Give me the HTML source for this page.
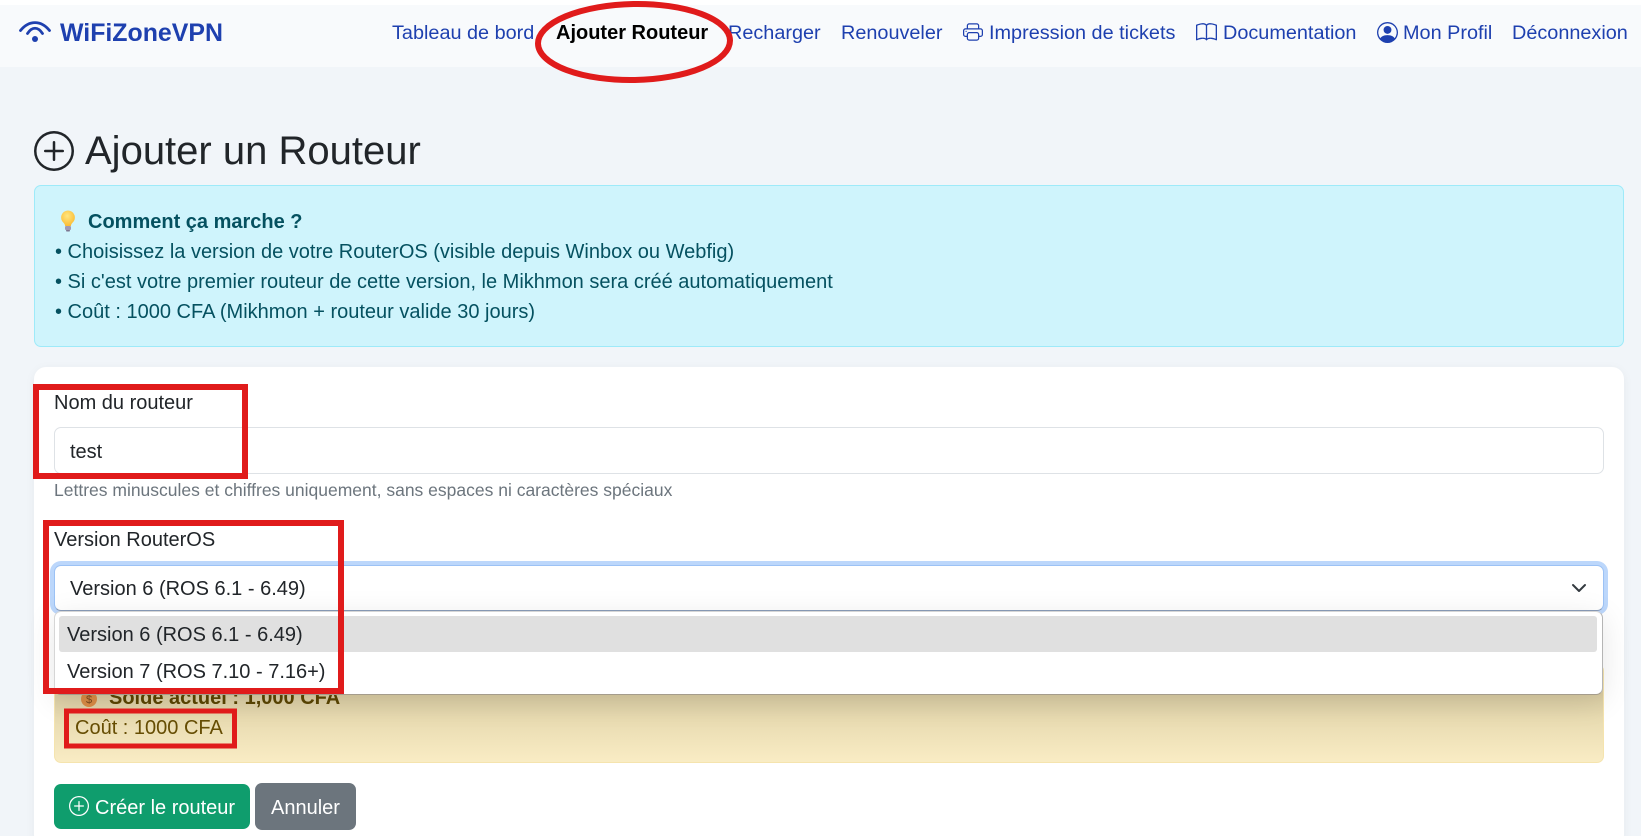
<!DOCTYPE html>
<html lang="fr"><head><meta charset="utf-8"><title>Ajouter un Routeur</title>
<style>
html,body{margin:0;padding:0;width:1641px;height:836px;overflow:hidden;background:#f1f5f9}
body{position:relative;font-family:"Liberation Sans",Arial,sans-serif;color:#212529}
.a{position:absolute}
.t{position:absolute;white-space:nowrap;line-height:30px;height:30px;font-size:20px}
.n{color:#1e40af;top:18px;font-size:19.85px}
svg{position:absolute;display:block}
</style></head><body>
<div class="a" style="left:0;top:0;width:1641px;height:5px;background:#fff"></div>
<div class="a" style="left:0;top:5px;width:1641px;height:62px;background:#f8fafc"></div>

<svg style="left:0;top:0" width="60" height="60" fill="none" stroke="#1e40af" stroke-width="2.800" stroke-linecap="round"><path d="M20.500 30.500C29 20 41 20 49.500 30.500"/><path d="M27.500 33.500C32 26.500 38 26.500 42.500 33.500"/><circle cx="35" cy="39" r="3" fill="#1e40af" stroke="none"/></svg>
<div class="t" style="left:60px;top:18px;font-size:24.9px;font-weight:700;color:#1e40af">WiFiZoneVPN</div>

<div class="t n" style="left:392px">Tableau de bord</div>
<div class="t" style="left:556px;top:18px;font-weight:700;color:#000">Ajouter Routeur</div>
<div class="t n" style="left:728px">Recharger</div>
<div class="t n" style="left:841px">Renouveler</div>
<svg style="left:963px;top:22px" width="20" height="20" viewBox="0 0 16 16" fill="#1e40af"><path d="M2.500 8a.5.5 0 1 0 0-1 .5.5 0 0 0 0 1"/><path d="M5 1a2 2 0 0 0-2 2v2H2a2 2 0 0 0-2 2v3a2 2 0 0 0 2 2h1v1a2 2 0 0 0 2 2h6a2 2 0 0 0 2-2v-1h1a2 2 0 0 0 2-2V7a2 2 0 0 0-2-2h-1V3a2 2 0 0 0-2-2zM4 3a1 1 0 0 1 1-1h6a1 1 0 0 1 1 1v2H4zm1 5a2 2 0 0 0-2 2v1H2a1 1 0 0 1-1-1V7a1 1 0 0 1 1-1h12a1 1 0 0 1 1 1v3a1 1 0 0 1-1 1h-1v-1a2 2 0 0 0-2-2zm7 2v3a1 1 0 0 1-1 1H5a1 1 0 0 1-1-1v-3a1 1 0 0 1 1-1h6a1 1 0 0 1 1 1"/></svg>
<div class="t n" style="left:989px">Impression de tickets</div>
<svg style="left:1196px;top:22px" width="21" height="21" viewBox="0 0 16 16" fill="#1e40af"><path d="M1 2.828c.885-.37 2.154-.769 3.388-.893 1.330-.134 2.458.063 3.112.752v9.746c-.935-.53-2.120-.603-3.213-.493-1.180.12-2.370.461-3.287.811zm7.500-.141c.654-.689 1.782-.886 3.112-.752 1.234.124 2.503.523 3.388.893v9.923c-.918-.35-2.107-.692-3.287-.81-1.094-.111-2.278-.039-3.213.492zM8 1.783C7.015.936 5.587.81 4.287.94c-1.514.153-3.042.672-3.994 1.105A.5.5 0 0 0 0 2.500v11a.5.5 0 0 0 .707.455c.882-.4 2.303-.881 3.680-1.020 1.409-.142 2.590.087 3.223.877a.5.5 0 0 0 .78 0c.633-.79 1.814-1.019 3.222-.877 1.378.139 2.800.62 3.681 1.020A.5.5 0 0 0 16 13.500v-11a.5.5 0 0 0-.293-.455c-.952-.433-2.480-.952-3.994-1.105C10.413.809 8.985.936 8 1.783"/></svg>
<div class="t n" style="left:1223px">Documentation</div>
<svg style="left:1377px;top:22px" width="21" height="21" viewBox="0 0 16 16" fill="#1e40af"><path d="M11 6a3 3 0 1 1-6 0 3 3 0 0 1 6 0"/><path d="M0 8a8 8 0 1 1 16 0A8 8 0 0 1 0 8m8-7a7 7 0 0 0-5.468 11.370C3.242 11.226 4.805 10 8 10s4.757 1.225 5.468 2.370A7 7 0 0 0 8 1"/></svg>
<div class="t n" style="left:1403px">Mon Profil</div>
<div class="t n" style="left:1512px">Déconnexion</div>

<svg style="left:34px;top:131px" width="40" height="40" viewBox="0 0 16 16" fill="#212529"><path d="M8 15A7 7 0 1 1 8 1a7 7 0 0 1 0 14m0 1A8 8 0 1 0 8 0a8 8 0 0 0 0 16"/><path d="M8 4a.5.5 0 0 1 .5.5v3h3a.5.5 0 0 1 0 1h-3v3a.5.5 0 0 1-1 0v-3h-3a.5.5 0 0 1 0-1h3v-3A.5.5 0 0 1 8 4"/></svg>
<div class="t" style="left:85px;top:126px;height:50px;line-height:50px;font-size:40px">Ajouter un Routeur</div>

<div class="a" style="left:34px;top:185px;width:1588px;height:160px;background:#cff4fc;border:1px solid #9eeaf9;border-radius:7px"></div>
<svg style="left:57px;top:209px" width="22" height="24" viewBox="0 0 22 24"><defs><radialGradient id="b" cx=".45" cy=".35" r=".7"><stop offset="0" stop-color="#ffe680"/><stop offset="1" stop-color="#fbb92e"/></radialGradient></defs><path d="M11 1.500a7 7 0 0 0-4.500 12.300c1 .9 1.500 2 1.600 3.200h5.800c.1-1.200.6-2.300 1.600-3.200A7 7 0 0 0 11 1.500z" fill="url(#b)"/><rect x="8" y="17" width="6" height="4" rx="1" fill="#a29ab3"/><rect x="9" y="21" width="4" height="1.500" rx=".7" fill="#7d7690"/></svg>
<div class="t" style="left:88px;top:207px;font-weight:700;color:#055160">Comment ça marche ?</div>
<div class="t" style="left:55px;top:237px;color:#055160">• Choisissez la version de votre RouterOS (visible depuis Winbox ou Webfig)</div>
<div class="t" style="left:55px;top:267px;color:#055160">• Si c'est votre premier routeur de cette version, le Mikhmon sera créé automatiquement</div>
<div class="t" style="left:55px;top:297px;color:#055160">• Coût : 1000 CFA (Mikhmon + routeur valide 30 jours)</div>

<div class="a" style="left:34px;top:367px;width:1590px;height:480px;background:#fff;border-radius:12px;box-shadow:0 2px 10px rgba(0,0,0,.05)"></div>

<div class="t" style="left:54px;top:388px">Nom du routeur</div>
<div class="a" style="left:54px;top:427px;width:1548px;height:45px;background:#fff;border:1px solid #dee2e6;border-radius:7px"></div>
<div class="t" style="left:70px;top:437px">test</div>
<div class="t" style="left:54px;top:475px;font-size:17.500px;color:#6c757d">Lettres minuscules et chiffres uniquement, sans espaces ni caractères spéciaux</div>

<div class="t" style="left:54px;top:525px">Version RouterOS</div>

<div class="a" style="left:54px;top:664px;width:1548px;height:97px;background:linear-gradient(180deg,#d8cba2 0,#d8cba2 30%,#e8dbb1 55%,#f9ecc4 100%);border:1px solid #f5e4ae;border-radius:7px"></div>
<svg style="left:80px;top:690px" width="18" height="18" viewBox="0 0 18 18"><circle cx="9" cy="9" r="8" fill="#d98b45"/><text x="9" y="13" font-family="Liberation Sans,sans-serif" font-size="11" text-anchor="middle" fill="#7a4a1e">$</text></svg>
<div class="t" style="left:109px;top:683px;font-weight:700;color:#5a4503">Solde actuel : 1,000 CFA</div>
<div class="t" style="left:75px;top:713px;color:#664d03">Coût : 1000 CFA</div>

<div class="a" style="left:54px;top:565px;width:1548px;height:44px;background:#fff;border:1px solid #9cc2f5;border-bottom-color:#8a9cb8;border-radius:7px;box-shadow:0 0 0 4px #bcd7fb"></div>
<div class="t" style="left:70px;top:574px">Version 6 (ROS 6.1 - 6.49)</div>
<svg style="left:1571px;top:580px" width="16" height="16" viewBox="0 0 16 16" fill="none" stroke="#343a40" stroke-width="2" stroke-linecap="round" stroke-linejoin="round"><path d="m2 5 6 6 6-6"/></svg>

<div class="a" style="left:54px;top:611px;width:1547px;height:82px;background:#fff;border:1px solid #d6d6d6;border-bottom-color:#a59c8c;border-right-color:#b5b5b5;border-radius:7px;box-shadow:0 6px 30px rgba(0,0,0,.1)"></div>
<div class="a" style="left:59px;top:616px;width:1538px;height:36px;background:#e0e0e0;border-radius:3px"></div>
<div class="t" style="left:67px;top:620px">Version 6 (ROS 6.1 - 6.49)</div>
<div class="t" style="left:67px;top:657px">Version 7 (ROS 7.10 - 7.16+)</div>

<div class="a" style="left:54px;top:784px;width:196px;height:45px;background:#0f9d6d;border-radius:7px"></div>
<svg style="left:69px;top:796px" width="20" height="20" viewBox="0 0 16 16" fill="#fff"><path d="M8 15A7 7 0 1 1 8 1a7 7 0 0 1 0 14m0 1A8 8 0 1 0 8 0a8 8 0 0 0 0 16"/><path d="M8 4a.5.5 0 0 1 .5.5v3h3a.5.5 0 0 1 0 1h-3v3a.5.5 0 0 1-1 0v-3h-3a.5.5 0 0 1 0-1h3v-3A.5.5 0 0 1 8 4"/></svg>
<div class="t" style="left:95px;top:793px;color:#fff">Créer le routeur</div>
<div class="a" style="left:255px;top:783px;width:101px;height:47px;background:#6c757d;border-radius:7px"></div>
<div class="t" style="left:271px;top:793px;color:#fff">Annuler</div>

<svg style="left:0;top:0" width="1641" height="836" fill="none" stroke="#e01b1b">
<ellipse cx="634" cy="42" rx="96" ry="38" stroke-width="6" transform="rotate(-1 634 42)"/>
<rect x="36" y="387" width="209" height="89" stroke-width="6"/>
<rect x="46" y="523" width="295" height="168" stroke-width="6"/>
<rect x="66.500" y="711" width="168" height="35" stroke-width="5"/>
</svg>
</body></html>
